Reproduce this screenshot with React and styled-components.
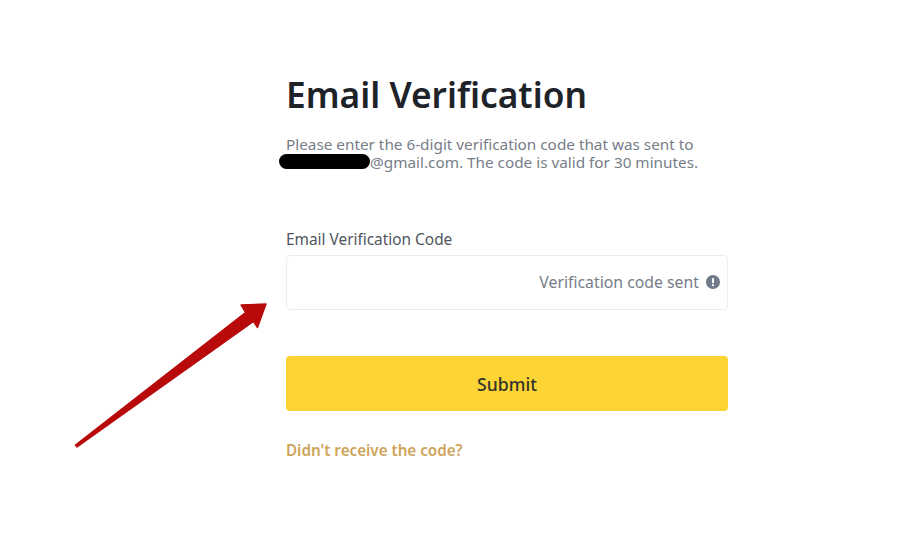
import React from "react";
import styled, { createGlobalStyle } from "styled-components";

const Global = createGlobalStyle`
  html, body { margin: 0; padding: 0; background: #fff; }
  body { font-family: "Noto Sans", "Open Sans", Arial, sans-serif; }
`;
const Page = styled.div`
  position: relative;
  width: 924px;
  height: 556px;
  overflow: hidden;
  background: #fff;
  display: flex;
  justify-content: flex-start;
  padding: 70px 0 0 286px;
  box-sizing: border-box;
`;
const Form = styled.main`
  width: 442px;
  display: flex;
  flex-direction: column;
`;
const Title = styled.h1`
  margin: 0;
  font-size: 35.3px;
  line-height: 48px;
  font-weight: 600;
  color: #1e2329;
`;
const Description = styled.p`
  position: relative;
  margin: 17px 0 0;
  font-size: 15.3px;
  line-height: 18px;
  color: #767d88;
  white-space: nowrap;
`;
const Hidden = styled.span`
  display: inline-block;
  width: 84px;
`;
const Redaction = styled.span`
  position: absolute;
  left: -7px;
  top: 19px;
  width: 91px;
  height: 15px;
  border-radius: 8px;
  background: #000;
`;
const Label = styled.label`
  margin-top: 59px;
  font-size: 15.4px;
  line-height: 20px;
  color: #50555d;
`;
const Field = styled.div`
  margin-top: 5px;
  height: 55px;
  box-sizing: border-box;
  border: 1px solid #eaecef;
  border-radius: 4px;
  display: flex;
  align-items: center;
  justify-content: flex-end;
  gap: 7px;
  padding: 0 7px 1px 0;
`;
const Hint = styled.span`
  font-size: 15.8px;
  color: #767d88;
`;
const Submit = styled.button`
  margin-top: 46px;
  height: 55px;
  border: 0;
  border-radius: 4px;
  background: #fcd535;
  color: #33332a;
  font: 500 17.6px "Noto Sans", sans-serif;
`;
const HelpLink = styled.a`
  margin-top: 29px;
  font-size: 15.2px;
  line-height: 20px;
  font-weight: 600;
  color: #cda45a;
`;
const Arrow = styled.svg`
  position: absolute;
  left: 0;
  top: 0;
  pointer-events: none;
`;

export default function App() {
  return (
    <Page>
      <Global />
      <Form>
        <Title>Email Verification</Title>
        <Description>
          Please enter the 6-digit verification code that was sent to
          <br />
          <Hidden />@gmail.com. The code is valid for 30 minutes.
          <Redaction />
        </Description>
        <Label>Email Verification Code</Label>
        <Field>
          <Hint>Verification code sent</Hint>
          <svg width="14" height="14" viewBox="0 0 14 14">
            <circle cx="7" cy="7" r="7" fill="#707a8a" />
            <rect x="6" y="3" width="2" height="5.2" rx="0.8" fill="#fff" />
            <circle cx="7" cy="10.2" r="1.1" fill="#fff" />
          </svg>
        </Field>
        <Submit>Submit</Submit>
        <HelpLink>Didn't receive the code?</HelpLink>
      </Form>
      <Arrow width="924" height="556" viewBox="0 0 924 556">
        <path
          d="M75.5 445 L245.5 312.5 L241 305 L266 304 L257.5 327.5 L253.5 321.5 L77 447 Z"
          fill="#b80a0a"
          stroke="#b80a0a"
          strokeWidth="1.4"
          strokeLinejoin="round"
        />
      </Arrow>
    </Page>
  );
}
